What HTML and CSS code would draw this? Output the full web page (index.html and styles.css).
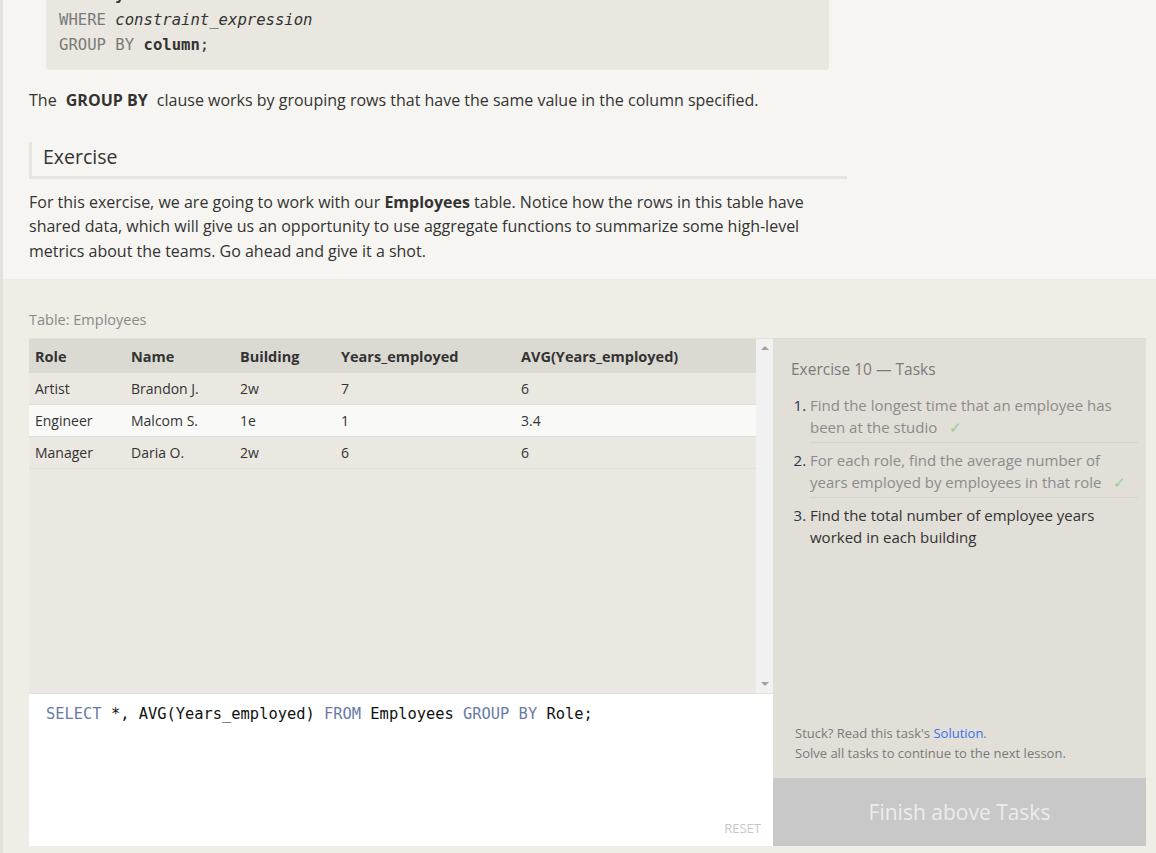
FILE: index.html
```html
<!DOCTYPE html>
<html lang="en">
<head>
<meta charset="utf-8">
<title>SQL Lesson 10</title>
<link rel="stylesheet" href="styles.css">
</head>
<body>
<div class="page">
  <section class="lesson">
    <pre class="code-block"><span class="kw">FROM</span> <b>mytable</b>
<span class="kw">WHERE</span> <i>constraint_expression</i>
<span class="kw">GROUP BY</span> <b>column</b>;</pre>
    <p class="text">The <strong class="term">GROUP BY</strong> clause works by grouping rows that have the same value in the column specified.</p>
    <h2 class="section-title">Exercise</h2>
    <p class="text">For this exercise, we are going to work with our <strong>Employees</strong> table. Notice how the rows in this table have shared data, which will give us an opportunity to use aggregate functions to summarize some high-level metrics about the teams. Go ahead and give it a shot.</p>
  </section>

  <section class="exercise">
    <div class="table-label">Table: Employees</div>
    <div class="workspace">
      <div class="left">
        <div class="results">
          <div class="table-wrap">
            <table class="data">
              <colgroup>
                <col class="c1"><col class="c2"><col class="c3"><col class="c4"><col>
              </colgroup>
              <thead>
                <tr><th>Role</th><th>Name</th><th>Building</th><th>Years_employed</th><th>AVG(Years_employed)</th></tr>
              </thead>
              <tbody>
                <tr><td>Artist</td><td>Brandon J.</td><td>2w</td><td>7</td><td>6</td></tr>
                <tr class="alt"><td>Engineer</td><td>Malcom S.</td><td>1e</td><td>1</td><td>3.4</td></tr>
                <tr><td>Manager</td><td>Daria O.</td><td>2w</td><td>6</td><td>6</td></tr>
              </tbody>
            </table>
          </div>
          <div class="scrollbar">
            <span class="arrow up"></span>
            <span class="arrow down"></span>
          </div>
        </div>
        <div class="editor">
          <pre class="query"><span class="sk">SELECT</span> *, AVG(Years_employed) <span class="sk">FROM</span> Employees <span class="sk">GROUP BY</span> Role;</pre>
          <div class="reset">RESET</div>
        </div>
      </div>

      <aside class="tasks">
        <div class="tasks-body">
          <h3 class="tasks-title">Exercise 10 — Tasks</h3>
          <ol class="task-list">
            <li class="done">Find the longest time that an employee has been at the studio <span class="check">✓</span></li>
            <li class="done">For each role, find the average number of years employed by employees in that role <span class="check">✓</span></li>
            <li class="current">Find the total number of employee years worked in each building</li>
          </ol>
        </div>
        <div class="tasks-foot">
          <div>Stuck? Read this task's <a class="solution" href="#">Solution</a>.</div>
          <div>Solve all tasks to continue to the next lesson.</div>
        </div>
        <div class="finish">Finish above Tasks</div>
      </aside>
    </div>
  </section>
</div>
</body>
</html>
```

FILE: styles.css
```css
html, body {
  margin: 0;
  padding: 0;
}

body {
  background: #e4e1dd;
  font-family: "Open Sans", "Noto Sans", sans-serif;
  color: #333;
  overflow: hidden;
}

.page {
  margin-left: 3px;
}

/* ---------- Lesson text ---------- */
.lesson {
  background: #f6f5f1;
  padding: 0 0 16px 26px;
  overflow: hidden;
}

.lesson > * {
  width: 818px;
}

.code-block {
  box-sizing: border-box;
  width: 783px;
  margin: -29px 0 0 17px;
  padding: 12px 13px 12px;
  background: #e9e7e0;
  border-radius: 4px;
  font-family: "DejaVu Sans Mono", "Liberation Mono", monospace;
  font-size: 15.6px;
  line-height: 25px;
  color: #333;
}

.code-block .kw {
  color: #7a7a7a;
}

.code-block i {
  font-style: italic;
}

.text {
  margin: 18px 0 0;
  font-size: 16px;
  line-height: 24.5px;
}

.term {
  padding: 0 5px;
}

.section-title {
  box-sizing: border-box;
  margin: 29px 0 0;
  padding: 0 0 5px 11px;
  border-left: 3px solid #e6e4dc;
  border-bottom: 3px solid #e6e4dc;
  font-size: 19.5px;
  line-height: 29px;
  font-weight: 400;
  color: #333;
}

.section-title + .text {
  margin-top: 11px;
}

/* ---------- Exercise area ---------- */
.exercise {
  background: #efede6;
  padding: 31px 10px 8px 26px;
}

.table-label {
  font-size: 14.5px;
  line-height: 20px;
  color: #8a8a8a;
  margin-bottom: 8px;
}

.workspace {
  display: grid;
  grid-template-columns: 744px 373px;
  height: 508px;
}

.left {
  display: flex;
  flex-direction: column;
}

.results {
  display: flex;
  height: 356px;
  background: #eae8e1;
  border-top: 1px solid #e4e2db;
  box-sizing: border-box;
  border-bottom: 1px solid #e2e0da;
}

.table-wrap {
  flex: 1;
}

.data {
  width: 100%;
  border-collapse: collapse;
  table-layout: fixed;
  font-size: 14px;
}

.data .c1 { width: 96px; }
.data .c2 { width: 109px; }
.data .c3 { width: 101px; }
.data .c4 { width: 180px; }

.data th {
  background: #dbdad2;
  text-align: left;
  font-weight: 700;
  font-size: 14.5px;
  height: 34px;
  padding: 0 6px;
  color: #333;
}

.data td {
  height: 31px;
  padding: 0 6px;
  border-bottom: 1px solid #e0ded8;
  color: #333;
}

.data tr.alt td {
  background: #f9f9f8;
}

.scrollbar {
  width: 17px;
  background: #f1f1f1;
  display: flex;
  flex-direction: column;
  justify-content: space-between;
  align-items: center;
  padding: 7px 0;
  box-sizing: border-box;
}

.arrow {
  width: 0;
  height: 0;
  border-left: 4px solid transparent;
  border-right: 4px solid transparent;
}

.arrow.up {
  border-bottom: 4px solid #a3a3a3;
}

.arrow.down {
  border-top: 4px solid #a3a3a3;
}

.editor {
  flex: 1;
  background: #fff;
  display: flex;
  flex-direction: column;
  justify-content: space-between;
}

.query {
  margin: 0;
  padding: 10px 17px 0;
  font-family: "DejaVu Sans Mono", "Liberation Mono", monospace;
  font-size: 15.4px;
  line-height: 20px;
  color: #111;
}

.query .sk {
  color: #6a7aa8;
}

.reset {
  align-self: flex-end;
  padding: 0 12px 8px 0;
  font-size: 13px;
  line-height: 20px;
  color: #c8c8c8;
}

/* ---------- Tasks panel ---------- */
.tasks {
  display: flex;
  flex-direction: column;
  background: #e1dfd8;
  border-top: 1px solid #dcdbd3;
  box-sizing: border-box;
}

.tasks-body {
  flex: 1;
  padding: 19px 8px 0 18px;
}

.tasks-title {
  margin: 0 0 14px;
  font-size: 15.5px;
  line-height: 22px;
  font-weight: 400;
  color: #7b7b7b;
}

.task-list {
  margin: 0;
  padding: 0 0 0 19px;
  font-size: 15px;
  line-height: 22px;
}

.task-list li {
  padding: 0 0 4px;
  margin-bottom: 6px;
  border-bottom: 1px solid #d6d3cb;
}

.task-list li:last-child {
  border-bottom: none;
}

.task-list li::marker {
  color: #2d3450;
}

.task-list li.done {
  color: #8c8c8c;
}

.task-list li.current {
  color: #333;
}

.check {
  margin-left: 8px;
  color: #93cc93;
}

.tasks-foot {
  padding: 0 10px 15px 22px;
  font-size: 13px;
  line-height: 20px;
  color: #7a7a7a;
}

.solution {
  color: #3a6ff0;
  text-decoration: none;
}

.finish {
  height: 68px;
  background: #c8c8c8;
  color: #ececec;
  font-size: 21px;
  display: flex;
  align-items: center;
  justify-content: center;
}
```
